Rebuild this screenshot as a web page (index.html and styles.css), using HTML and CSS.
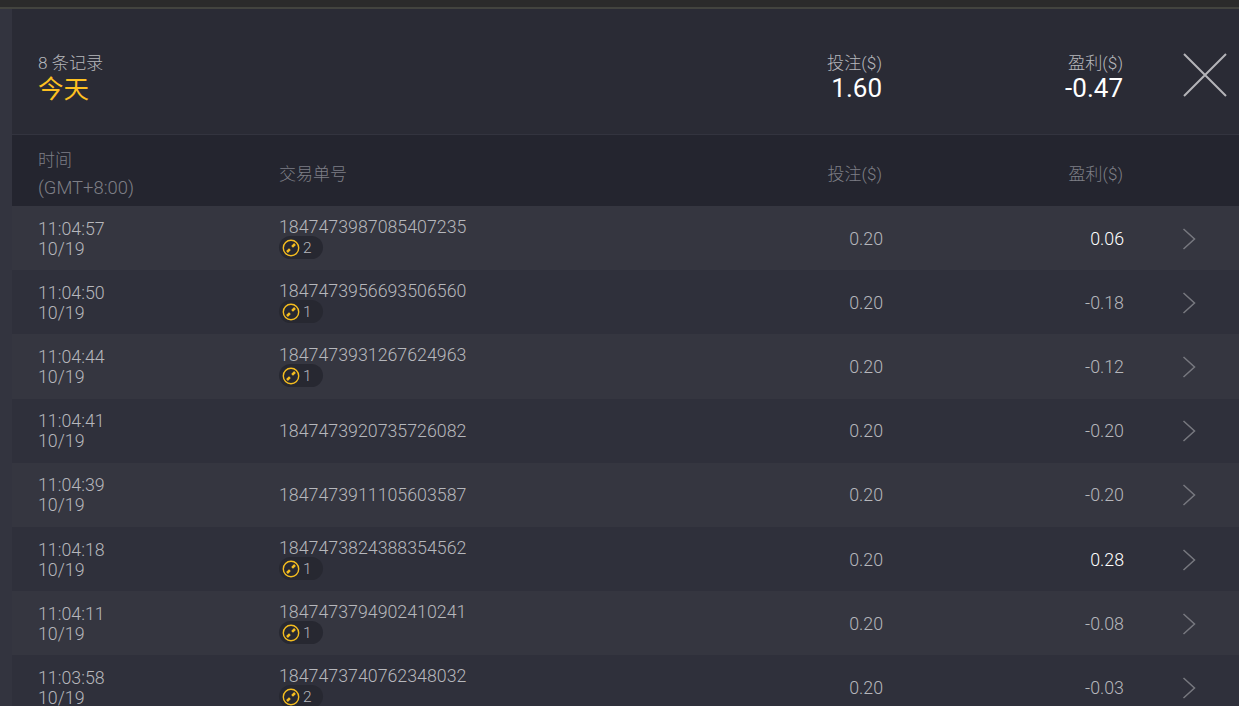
FILE: index.html
```html
<!DOCTYPE html>
<html lang="zh-CN">
<head>
<meta charset="utf-8">
<title>记录</title>
<link rel="stylesheet" href="styles.css">
</head>
<body>
<svg width="0" height="0" class="defs">
  <symbol id="coin" viewBox="0 0 18 18">
    <circle cx="9" cy="9" r="7.7" fill="none" stroke="#f5bd1f" stroke-width="1.4"/>
    <path d="M5 13 7.9 10.1 M10.1 7.9 13 5" fill="none" stroke="#f5bd1f" stroke-width="2.5"/>
  </symbol>
  <symbol id="chev" viewBox="0 0 14 22">
    <path d="M1.5 1 12.5 11 1.5 21" fill="none" stroke="#77787f" stroke-width="1.5"/>
  </symbol>
</svg>
<div class="topbar"></div>
<div class="panel">
  <header class="summary">
    <div class="col-a head-a">
      <div class="count">8 条记录</div>
      <div class="today">今天</div>
    </div>
    <div class="col-b"></div>
    <div class="col-c"><div class="label">投注($)</div><div class="total">1.60</div></div>
    <div class="col-d"><div class="label">盈利($)</div><div class="total">-0.47</div></div>
    <div class="col-e">
      <svg class="close" width="44" height="44" viewBox="0 0 44 44"><path d="M1 1 43 43 M43 1 1 43" fill="none" stroke="#b4b4b8" stroke-width="2"/></svg>
    </div>
  </header>
  <div class="thead">
    <div class="col-a"><div>时间</div><div class="gmt">(GMT+8:00)</div></div>
    <div class="col-b">交易单号</div>
    <div class="col-c">投注($)</div>
    <div class="col-d">盈利($)</div>
    <div class="col-e"></div>
  </div>
  <div class="row">
    <div class="col-a"><div>11:04:57</div><div>10/19</div></div>
    <div class="col-b"><div>1847473987085407235</div><div class="chip"><svg width="18" height="18"><use href="#coin"/></svg><span>2</span></div></div>
    <div class="col-c">0.20</div><div class="col-d win">0.06</div>
    <div class="col-e"><svg class="chevron" width="14" height="22"><use href="#chev"/></svg></div>
  </div>
  <div class="row">
    <div class="col-a"><div>11:04:50</div><div>10/19</div></div>
    <div class="col-b"><div>1847473956693506560</div><div class="chip"><svg width="18" height="18"><use href="#coin"/></svg><span>1</span></div></div>
    <div class="col-c">0.20</div><div class="col-d">-0.18</div>
    <div class="col-e"><svg class="chevron" width="14" height="22"><use href="#chev"/></svg></div>
  </div>
  <div class="row">
    <div class="col-a"><div>11:04:44</div><div>10/19</div></div>
    <div class="col-b"><div>1847473931267624963</div><div class="chip"><svg width="18" height="18"><use href="#coin"/></svg><span>1</span></div></div>
    <div class="col-c">0.20</div><div class="col-d">-0.12</div>
    <div class="col-e"><svg class="chevron" width="14" height="22"><use href="#chev"/></svg></div>
  </div>
  <div class="row">
    <div class="col-a"><div>11:04:41</div><div>10/19</div></div>
    <div class="col-b"><div>1847473920735726082</div></div>
    <div class="col-c">0.20</div><div class="col-d">-0.20</div>
    <div class="col-e"><svg class="chevron" width="14" height="22"><use href="#chev"/></svg></div>
  </div>
  <div class="row">
    <div class="col-a"><div>11:04:39</div><div>10/19</div></div>
    <div class="col-b"><div>1847473911105603587</div></div>
    <div class="col-c">0.20</div><div class="col-d">-0.20</div>
    <div class="col-e"><svg class="chevron" width="14" height="22"><use href="#chev"/></svg></div>
  </div>
  <div class="row">
    <div class="col-a"><div>11:04:18</div><div>10/19</div></div>
    <div class="col-b"><div>1847473824388354562</div><div class="chip"><svg width="18" height="18"><use href="#coin"/></svg><span>1</span></div></div>
    <div class="col-c">0.20</div><div class="col-d win">0.28</div>
    <div class="col-e"><svg class="chevron" width="14" height="22"><use href="#chev"/></svg></div>
  </div>
  <div class="row">
    <div class="col-a"><div>11:04:11</div><div>10/19</div></div>
    <div class="col-b"><div>1847473794902410241</div><div class="chip"><svg width="18" height="18"><use href="#coin"/></svg><span>1</span></div></div>
    <div class="col-c">0.20</div><div class="col-d">-0.08</div>
    <div class="col-e"><svg class="chevron" width="14" height="22"><use href="#chev"/></svg></div>
  </div>
  <div class="row">
    <div class="col-a"><div>11:03:58</div><div>10/19</div></div>
    <div class="col-b"><div>1847473740762348032</div><div class="chip"><svg width="18" height="18"><use href="#coin"/></svg><span>2</span></div></div>
    <div class="col-c">0.20</div><div class="col-d">-0.03</div>
    <div class="col-e"><svg class="chevron" width="14" height="22"><use href="#chev"/></svg></div>
  </div>
</div>
</body>
</html>
```

FILE: styles.css
```css
html, body {
  margin: 0;
  height: 100%;
  overflow: hidden;
}
body {
  background: #33343f;
  font-family: Roboto, "Noto Sans CJK SC", sans-serif;
  font-size: 17.8px;
  font-weight: 300;
  line-height: 20px;
  color: #b6b7bc;
}
.defs {
  display: none;
}
.topbar {
  height: 7px;
  background: #2b2b2b;
  border-bottom: 2px solid #43443f;
}
.panel {
  margin-left: 12px;
  background: #2a2b35;
}
.summary, .thead, .row {
  display: flex;
  align-items: center;
}
.col-a {
  width: 241px;
  padding-left: 26px;
  flex: none;
}
.col-b {
  width: 362px;
  flex: none;
}
.col-c, .col-d {
  width: 241px;
  text-align: right;
  flex: none;
}
.col-e {
  flex: 1;
  display: flex;
  padding-left: 59px;
}
.summary {
  box-sizing: border-box;
  height: 126px;
  padding-top: 12px;
  border-bottom: 1px solid #33343f;
}
.head-a {
  padding-top: 2px;
}
.count, .label {
  font-size: 17.2px;
  line-height: 20px;
}
.today {
  margin-top: 2px;
  color: #fdc021;
  font-size: 25.5px;
  font-weight: 400;
  line-height: 29px;
}
.total {
  color: #fff;
  font-size: 26px;
  font-weight: 400;
  line-height: 30px;
}
.close {
  margin-left: 1px;
  margin-top: -6px;
}
.thead {
  box-sizing: border-box;
  height: 71px;
  padding-top: 7px;
  background: #24252f;
  color: #7e7f86;
  font-size: 17px;
}
.gmt {
  margin-top: 8px;
  font-size: 18.4px;
}
.row {
  box-sizing: border-box;
  height: 64.2px;
  padding-top: 1px;
  background: #2f303b;
}
.row:nth-child(odd) {
  background: #353640;
}
.row .col-b {
  width: 363px;
}
.row .col-c, .row .col-d, .row .col-b:not(:has(.chip)) {
  padding-top: 0.3px;
}
.row .col-e {
  padding-left: 58px;
}
.win {
  color: #fff;
}
.chip {
  display: flex;
  align-items: center;
  gap: 3px;
  width: 44px;
  height: 23px;
  margin-top: -1px;
  margin-bottom: 1px;
  padding-left: 3px;
  box-sizing: border-box;
  border-radius: 12px;
  background: #272831;
  font-size: 15.5px;
}
.chip svg {
  flex: none;
}
```
